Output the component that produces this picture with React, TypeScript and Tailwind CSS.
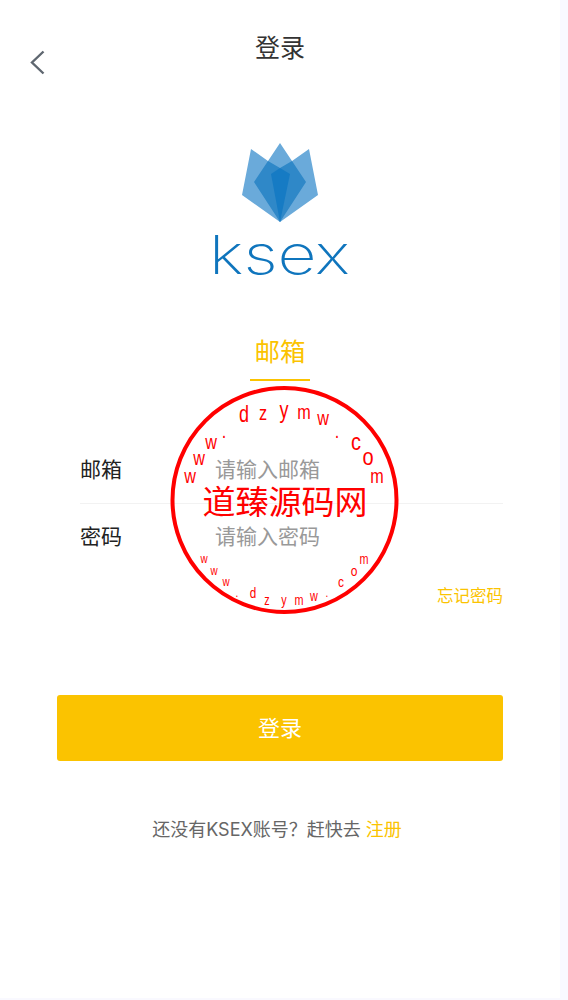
const FONT = "font-['Inter','Noto_Sans_CJK_SC',sans-serif]";

const topLetters: [string, number, number, number][] = [
  ["w", 190, 476, 18], ["w", 199, 458, 18], ["w", 211, 442, 18], [".", 224, 437, 18],
  ["d", 244, 414, 20], ["z", 263, 413, 18], ["y", 284, 410, 20], ["m", 304, 412, 18],
  ["w", 323, 418, 18], [".", 337, 437, 18], ["c", 356, 442, 20], ["o", 368, 457, 20], ["m", 377, 476, 18],
];

const bottomLetters: [string, number, number, number][] = [
  ["w", 204, 559, 11], ["w", 214, 571, 11], ["w", 226, 582, 11], [".", 237, 596, 11],
  ["d", 253, 593, 13], ["z", 267, 600, 12], ["y", 284, 600, 12], ["m", 299, 600, 12],
  ["w", 314, 596, 12], [".", 327, 596, 11], ["c", 341, 582, 12], ["o", 354, 571, 12], ["m", 364, 559, 12],
];

// coordinates in here are page coordinates, the svg sits at 170,386
const Stamp = () => (
  <svg className="absolute left-[170px] top-[386px] pointer-events-none" width="230" height="230" viewBox="170 386 230 230">
    <circle cx="284.5" cy="500" r="112" fill="none" stroke="#ff0000" strokeWidth="4" />
    {[...topLetters, ...bottomLetters].map(([ch, x, y, size], i) => (
      <text
        key={i}
        transform={`translate(${x} ${ch === "." ? y + 1 : y}) scale(${ch === "c" || ch === "o" ? 1 : 0.9} 1.15)`}
        dy={ch === "." ? 0 : "0.35em"}
        textAnchor="middle"
        fontSize={size}
        fill="#ff0000"
        fontFamily="'Liberation Sans', sans-serif"
      >
        {ch}
      </text>
    ))}
    <text x="285" y="514" textAnchor="middle" fontSize="33" fill="#ff0000" fontFamily="'Noto Sans CJK SC', sans-serif">
      道臻源码网
    </text>
  </svg>
);

const Logo = () => (
  <svg width="160" height="150" viewBox="200 141 160 150">
    <polygon points="251,149 268,161 280,143 292,161 309,149 318,195 280,222 242,195" fill="#6aaada" />
    <polygon points="254,182 268,161 280,168 292,161 306,182 280,222" fill="#2f88c8" />
    <polygon points="271,174 280,168 290,174 280,222" fill="#167bc4" />
    <text x="209" y="274" textLength="141" lengthAdjust="spacingAndGlyphs" fontSize="54" fontWeight="250" fill="#0f75bd" fontFamily="'Inter', sans-serif">
      ksex
    </text>
  </svg>
);

const Field = ({ label, hint }: { label: string; hint: string }) => (
  <div className="flex items-center h-[66px]">
    <span className="w-[135px] text-[21px] text-[#222]">{label}</span>
    <input className="flex-1 min-w-0 outline-none text-[21px] placeholder:text-[#999]" placeholder={hint} />
  </div>
);

export default function App() {
  return (
    <div className={`relative min-h-[1000px] bg-[#f9f9ff] pb-[2px] ${FONT}`}>
      <div className="w-[560px] h-[998px] bg-white flex flex-col items-center">
        <div className="relative w-full h-[96px] flex justify-center pt-[30px]">
          <svg className="absolute left-[29px] top-[50px]" width="18" height="25" viewBox="0 0 18 25" fill="none">
            <path d="M14.5 1.5 L3 12.5 L14.5 23.5" stroke="#5f6770" strokeWidth="2.4" />
          </svg>
          <h1 className="text-[25px] leading-[36px] text-[#333]">登录</h1>
        </div>

        <div className="mt-[45px] h-[150px]">
          <Logo />
        </div>

        <div className="mt-[39px] w-[60px] h-[51px] border-b-2 border-[#fbc300] flex justify-center text-[25.5px] leading-[44px] text-[#fbc300] whitespace-nowrap">
          邮箱
        </div>

        <div className="mt-[56px] w-[423px] ml-[23px]">
          <Field label="邮箱" hint="请输入邮箱" />
          <div className="h-px bg-[#f2f2f2]" />
          <Field label="密码" hint="请输入密码" />
          <div className="mt-[14px] text-right text-[16.5px] leading-[24px] text-[#fbc300]">忘记密码</div>
        </div>

        <button className="mt-[87px] w-[446px] h-[66px] rounded-[3px] bg-[#fbc300] text-white text-[22px]">
          登录
        </button>

        <div className="mt-[56px] mr-[6px] text-[18px] leading-[26px] text-[#666]">
          还没有KSEX账号？赶快去 <span className="text-[#fbc300]">注册</span>
        </div>
      </div>
      <Stamp />
    </div>
  );
}
